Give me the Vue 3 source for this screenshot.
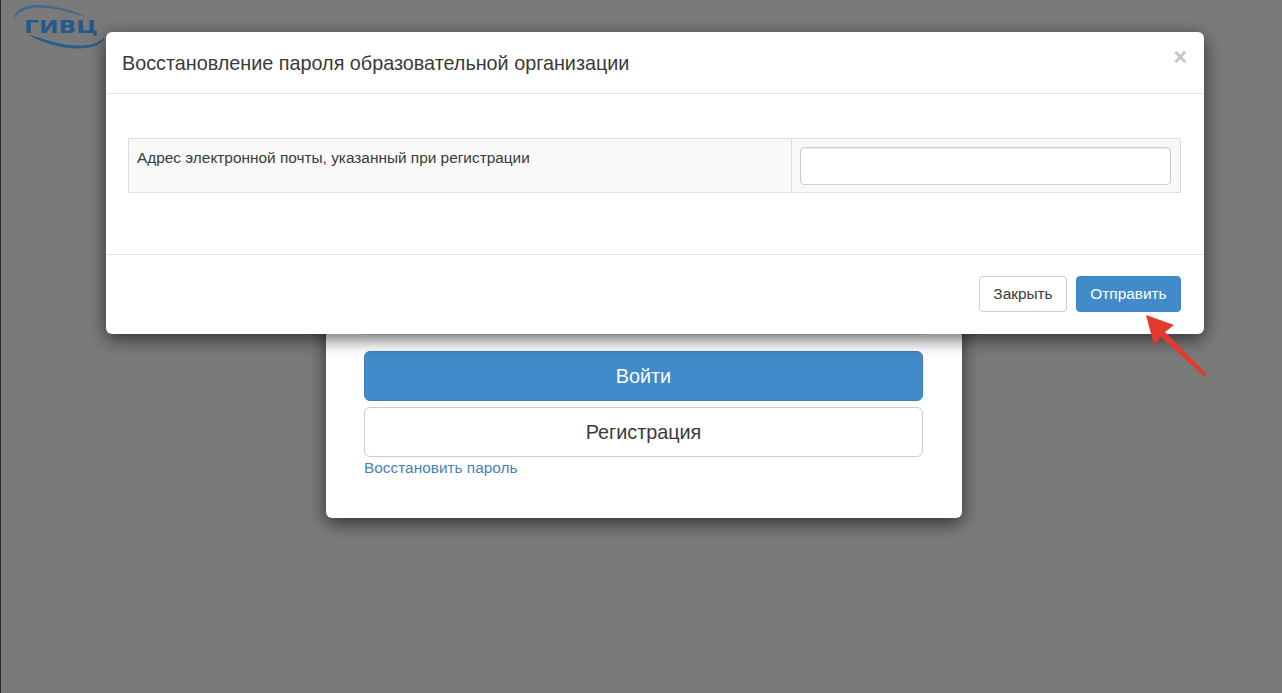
<template>
  <div class="page">
    <svg class="logo" width="108" height="52" viewBox="0 0 108 52" aria-label="ГИВЦ">
      <path d="M13 19 C13 10 24 5 38 5 C56 6 76 11 86 18 C70 12 52 7.5 38 7.5 C26 7.5 17 11 13 19 Z" fill="#41668c" />
      <path d="M27 34 C42 39 60 46 80 45.5 C92 45 100 42 103.500 37 C103 44 92 48.500 76 48.500 C58 48.500 38 42 27 34 Z" fill="#27608f" />
      <text x="23" y="33" class="logo-text" textLength="74" lengthAdjust="spacingAndGlyphs">ГИВЦ</text>
    </svg>

    <main class="login">
      <div class="hidden-field"></div>
      <button class="big primary">Войти</button>
      <button class="big plain">Регистрация</button>
      <a class="restore">Восстановить пароль</a>
    </main>

    <section class="modal">
      <header class="modal-head">
        <h4>Восстановление пароля образовательной организации</h4>
        <span class="close">×</span>
      </header>
      <div class="modal-body">
        <div class="row">
          <div class="cell label">Адрес электронной почты, указанный при регистрации</div>
          <div class="cell field"><input type="text" /></div>
        </div>
      </div>
      <footer class="modal-foot">
        <button class="btn">Закрыть</button>
        <button class="btn send">Отправить</button>
      </footer>
    </section>

    <svg class="arrow" width="70" height="70" viewBox="0 0 70 70">
      <path d="M1 1 L29 11 L20 18 L62 60 L60 63 L16 23 L9 31 Z" fill="#e4392e" />
    </svg>
  </div>
</template>

<script setup>
</script>

<style>
html, body { margin: 0; background: #7a7a7a; }
</style>

<style scoped>
.page {
  position: relative;
  box-sizing: border-box;
  height: 693px;
  overflow: hidden;
  background: #7a7a7a;
  border-left: 1px solid #2c2c2c;
  font-family: "Liberation Sans", Arial, sans-serif;
  font-size: 15.4px;
  color: #3a3a3a;
}
.logo { position: absolute; left: 0; top: 0; }
.logo-text {
  font-family: "DejaVu Sans", "Liberation Sans", sans-serif;
  font-size: 17px;
  font-weight: 700;
  fill: #245a8a;
}
.login {
  box-sizing: border-box;
  width: 636px;
  height: 318px;
  margin: 200px 0 0 325px;
  padding: 0 38px;
  display: flex;
  flex-direction: column;
  background: #fff;
  border-radius: 6px;
  box-shadow: 0 5px 18px rgba(0, 0, 0, .6);
}
.hidden-field {
  height: 134px;
  margin: 0 3px 16px;
  border-bottom: 1px solid #e2e2e2;
  box-sizing: content-box;
}
.big {
  box-sizing: border-box;
  width: 559px;
  height: 50px;
  font: 19.8px "Liberation Sans", Arial, sans-serif;
  border-radius: 6px;
  border: 1px solid #ccc;
  padding: 0;
}
.primary { background: #428bca; border-color: #3d80bb; color: #fff; }
.plain { margin-top: 6px; background: #fff; color: #3a3a3a; }
.restore { margin-top: 0; line-height: 22px; color: #4a81b8; }

.modal {
  position: absolute;
  left: 105px;
  top: 32px;
  width: 1098px;
  height: 302px;
  display: flex;
  flex-direction: column;
  background: #fff;
  border-radius: 6px;
  box-shadow: 0 5px 18px rgba(0, 0, 0, .6);
}
.modal-head {
  box-sizing: border-box;
  height: 62px;
  flex: none;
  padding: 0 16px;
  display: flex;
  align-items: center;
  justify-content: space-between;
  border-bottom: 1px solid #e5e5e5;
}
.modal-head h4 { margin: 0; font-size: 19.8px; font-weight: 400; line-height: 22px; }
.close {
  align-self: flex-start;
  margin: 15px 1px 0 0;
  font-size: 23px;
  font-weight: 700;
  line-height: 21px;
  color: #c4c4c4;
}
.modal-body { flex: none; height: 160px; box-sizing: border-box; padding: 44px 23px 0 22px; }
.row {
  display: flex;
  height: 55px;
  box-sizing: border-box;
  border: 1px solid #ddd;
  background: #f9f9f9;
}
.cell { box-sizing: border-box; padding: 8px; }
.label { width: 663px; border-right: 1px solid #ddd; line-height: 22px; }
.field { flex: 1; padding-right: 9px; }
.field input {
  display: block;
  box-sizing: border-box;
  width: 100%;
  height: 38px;
  border: 1px solid #ccc;
  border-radius: 4px;
  background: #fff;
  box-shadow: inset 0 1px 1px rgba(0, 0, 0, .075);
}
.modal-foot {
  flex: 1;
  padding: 21px 23px 0 0;
  display: flex;
  justify-content: flex-end;
  align-items: flex-start;
  gap: 9px;
  border-top: 1px solid #e5e5e5;
}
.btn {
  box-sizing: border-box;
  height: 36px;
  width: 88px;
  padding: 0;
  font: 15.4px "Liberation Sans", Arial, sans-serif;
  color: #3a3a3a;
  background: #fff;
  border: 1px solid #ccc;
  border-radius: 4px;
}
.send { width: 105px; background: #428bca; border-color: #3f85c2; color: #fff; }
.arrow { position: absolute; left: 1144px; top: 314px; }
</style>
